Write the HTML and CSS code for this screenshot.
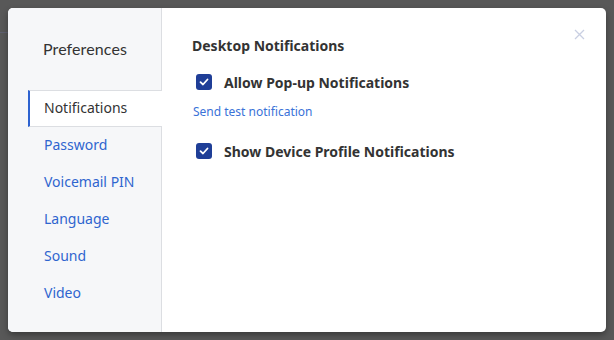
FILE: index.html
```html
<!DOCTYPE html>
<html lang="en">
<head>
    <meta charset="UTF-8">
    <title>Preferences</title>
    <link rel="stylesheet" href="styles.css">
</head>
<body>
<div class="backdrop-line"></div>
<div id="modal">
    <div class="side">
        <h2 class="side-title">Preferences</h2>
        <ul class="menu">
            <li class="selected">Notifications</li>
            <li>Password</li>
            <li>Voicemail PIN</li>
            <li>Language</li>
            <li>Sound</li>
            <li>Video</li>
        </ul>
    </div>
    <div class="main">
        <h3 class="section">Desktop Notifications</h3>
        <label class="check">
            <span class="box">
                <svg width="10" height="8" viewBox="0 0 10 8"><path d="M1.5 4.2 L4 6.5 L8.5 1.5" fill="none" stroke="#fff" stroke-width="1.8" stroke-linecap="round" stroke-linejoin="round"/></svg>
            </span>
            Allow Pop-up Notifications
        </label>
        <a class="test-link" href="#">Send test notification</a>
        <label class="check">
            <span class="box">
                <svg width="10" height="8" viewBox="0 0 10 8"><path d="M1.5 4.2 L4 6.5 L8.5 1.5" fill="none" stroke="#fff" stroke-width="1.8" stroke-linecap="round" stroke-linejoin="round"/></svg>
            </span>
            Show Device Profile Notifications
        </label>
    </div>
    <span class="close">
        <svg width="11" height="11" viewBox="0 0 11 11"><path d="M1 1 L10 10 M10 1 L1 10" stroke="#c9cfe2" stroke-width="1.3"/></svg>
    </span>
</div>
</body>
</html>
```
FILE: styles.css
```css
*{
    margin: 0;
    padding: 0;
    box-sizing: border-box;
}
html,body{
    height: 100%;
}
body{
    background: #585858;
    padding: 8px;
    font-family: "Noto Sans", "Open Sans", sans-serif;
    position: relative;
    overflow: hidden;
}
.backdrop-line{
    position: absolute;
    left: 0;
    top: 32px;
    width: 40px;
    height: 1px;
    background: #5f6070;
}
li{
    list-style: none;
}
#modal{
    position: relative;
    width: 598px;
    height: 324px;
    background: #fff;
    border-radius: 5px;
    display: flex;
    overflow: hidden;
    box-shadow: 0 3px 6px rgba(0,0,0,0.35);
}
.side{
    width: 154px;
    background: #f6f7f9;
    border-right: 1px solid #dcdee2;
    padding-top: 31px;
}
.side-title{
    font-family: "Lato", "Noto Sans", sans-serif;
    font-weight: 400;
    font-size: 16px;
    color: #333;
    padding-left: 35px;
    height: 51px;
    letter-spacing: 0.1px;
}
.menu{
    padding-left: 20px;
}
.menu li{
    height: 37px;
    line-height: 36px;
    padding-left: 16px;
    font-size: 14px;
    color: #2f65cf;
}
.menu li.selected{
    background: #fff;
    color: #333;
    border-top: 1px solid #dcdee2;
    border-bottom: 1px solid #dcdee2;
    border-left: 2px solid #2d62d0;
    margin-right: -1px;
    padding-left: 14px;
    line-height: 34px;
}
.main{
    flex: 1;
    padding: 28px 30px;
}
.section{
    font-size: 14px;
    font-weight: 700;
    color: #333;
    margin-bottom: 18px;
}
.check{
    display: flex;
    align-items: center;
    gap: 12px;
    font-size: 14px;
    font-weight: 700;
    color: #333;
    padding-left: 4px;
    height: 18px;
}
.box{
    width: 16px;
    height: 16px;
    border-radius: 3px;
    background: #1f3e97;
    display: flex;
    align-items: center;
    justify-content: center;
}
.test-link{
    display: block;
    font-size: 12px;
    color: #3a72d8;
    text-decoration: none;
    margin: 12px 0 22px 1px;
}
.close{
    position: absolute;
    right: 21px;
    top: 21px;
    line-height: 0;
}
```
